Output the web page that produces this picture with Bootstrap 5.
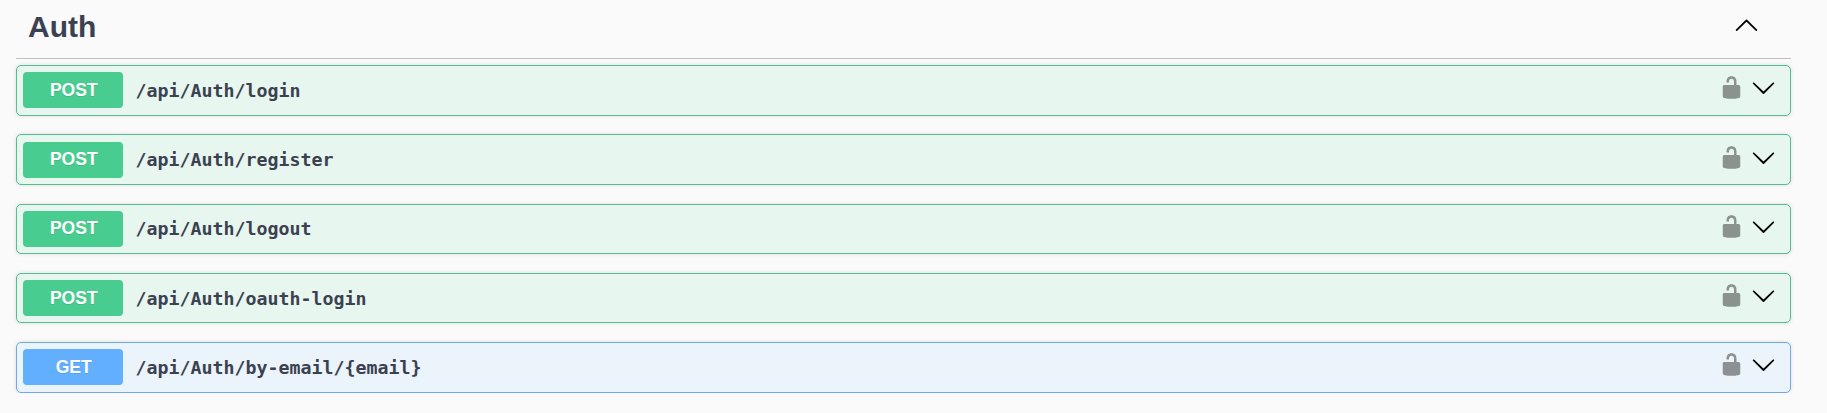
<!DOCTYPE html>
<html lang="en">
<head>
<meta charset="utf-8">
<title>Auth API</title>
<link href="https://cdn.jsdelivr.net/npm/bootstrap@5.3.0/dist/css/bootstrap.min.css" rel="stylesheet">
<style>
body{background:#fafafa;color:#3b4151;font-family:"Liberation Sans",Arial,sans-serif;overflow:hidden}
.api-section{width:1775px;margin-left:16px}
.tag-head{height:59px;border-bottom:1px solid #bfc0c4;padding:0 32px 0 12px}
.tag-head h3{font-size:30px;line-height:34px;margin-top:10px}
.tag-head svg{margin-top:12px}
.ops{display:grid;grid-template-rows:69px 70px 69px 69px 51px;margin-top:6px;align-items:start}
.op{height:51px;border:1px solid #55bd90;border-radius:5px;background:#e7f6ee;box-shadow:0 0 4px rgba(0,0,0,.12);padding:6px 14px 0 6px}
.op.low{padding-top:7px}
.op.short{height:50px}
.op.get{border-color:#70a9e5;background:#ebf3fb}
.verb{width:100px;height:36px;line-height:36px;padding-left:1.5px;border-radius:4px;background:#49cc90;color:#fff;font-size:17.5px;font-weight:700;text-align:center;text-shadow:0 1px 0 rgba(0,0,0,.1)}
.get .verb{background:#61affe}
.route{font-family:"DejaVu Sans Mono",monospace;font-size:18.27px;font-weight:700;line-height:37px;margin-left:12.5px}
.raised .verb{line-height:34px}
.raised .route{line-height:35px}
.icons{gap:7px;margin-top:3px}
.icons svg,.tag-head svg{width:25px;height:25px;display:block}
.lock{opacity:.4}
</style>
</head>
<body>
<svg class="d-none" xmlns="http://www.w3.org/2000/svg">
<symbol id="down" viewBox="0 0 20 20"><path d="M17.418 6.109c.272-.268.709-.268.979 0s.271.701 0 .969l-7.908 7.83c-.27.268-.707.268-.979 0l-7.908-7.83c-.27-.268-.271-.701 0-.969s.709-.268.979 0L10 13.25z"/></symbol>
<symbol id="up" viewBox="0 0 20 20"><path d="M17.418 14.908c.272.268.709.268.979 0s.271-.701 0-.969l-7.908-7.83c-.27-.268-.707-.268-.979 0l-7.908 7.83c-.27.268-.271.701 0 .969s.709.268.979 0L10 7.767z"/></symbol>
<symbol id="unlocked" viewBox="0 0 20 20"><path d="M15.8 8H14V5.6C14 2.703 12.665 1 10 1 7.334 1 6 2.703 6 5.6V6h2v-.801C8 3.754 8.797 3 10 3c1.203 0 2 .754 2 2.199V8H4c-.553 0-1 .646-1 1.199V17c0 .549.428 1.139.951 1.307l1.197.387C5.672 18.861 6.55 19 7.1 19h5.8c.549 0 1.428-.139 1.951-.307l1.196-.387c.524-.167.953-.757.953-1.306V9.199C17 8.646 16.352 8 15.8 8z"/></symbol>
</svg>
<main class="api-section">
  <header class="tag-head d-flex justify-content-between align-items-start">
    <h3 class="fw-bold mb-0">Auth</h3>
    <svg><use href="#up"/></svg>
  </header>
  <div class="ops">
    <div class="op d-flex align-items-start"><span class="verb">POST</span><span class="route">/api/Auth/login</span><div class="icons d-flex ms-auto"><svg class="lock"><use href="#unlocked"/></svg><svg><use href="#down"/></svg></div></div>
    <div class="op low raised d-flex align-items-start"><span class="verb">POST</span><span class="route">/api/Auth/register</span><div class="icons d-flex ms-auto"><svg class="lock"><use href="#unlocked"/></svg><svg><use href="#down"/></svg></div></div>
    <div class="op short raised d-flex align-items-start"><span class="verb">POST</span><span class="route">/api/Auth/logout</span><div class="icons d-flex ms-auto"><svg class="lock"><use href="#unlocked"/></svg><svg><use href="#down"/></svg></div></div>
    <div class="op short d-flex align-items-start"><span class="verb">POST</span><span class="route">/api/Auth/oauth-login</span><div class="icons d-flex ms-auto"><svg class="lock"><use href="#unlocked"/></svg><svg><use href="#down"/></svg></div></div>
    <div class="op get d-flex align-items-start"><span class="verb">GET</span><span class="route">/api/Auth/by-email/{email}</span><div class="icons d-flex ms-auto"><svg class="lock"><use href="#unlocked"/></svg><svg><use href="#down"/></svg></div></div>
  </div>
</main>
<script src="https://cdn.jsdelivr.net/npm/bootstrap@5.3.0/dist/js/bootstrap.bundle.min.js"></script>
</body>
</html>
